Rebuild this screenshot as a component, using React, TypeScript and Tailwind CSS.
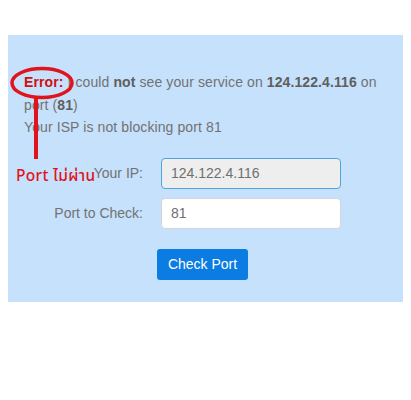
import React from "react";

export default function App() {
  return (
    <div className="w-[411px] h-[400px] bg-white pt-[35px] px-[8px] relative" style={{ fontFamily: "'Liberation Sans', Arial, sans-serif" }}>
      <div className="w-[395px] h-[267px] bg-[#c6e1fb] pt-[36px] pl-[16px] pr-[16px] text-[14px] text-[#727272]">
        <div className="leading-[23px] tracking-[0.1px]">
          <div className="pr-[8px]">
            <span className="text-[#d20f0f] font-bold">Error:</span> I could <b className="text-[#5f5f5f]">not</b> see your service on <b className="text-[#5f5f5f]">124.122.4.116</b> on port (<b className="text-[#5f5f5f]">81</b>)
          </div>
          <div className="leading-[20px]">Your ISP is not blocking port 81</div>
        </div>
        <div className="mt-[21px] flex flex-col gap-[9px]">
          <div className="flex items-center">
            <label className="w-[119px] text-right">Your IP:</label>
            <div className="ml-[18px] w-[180px] h-[31px] rounded-[4px] bg-[#eeeeee] border border-[#4ea6dc] flex items-center px-[9px] text-[#6f6f6f]">124.122.4.116</div>
          </div>
          <div className="flex items-center">
            <label className="w-[119px] text-right">Port to Check:</label>
            <div className="ml-[18px] w-[180px] h-[31px] rounded-[4px] bg-white border border-[#cfd6dd] flex items-center px-[9px] text-[#6f6f6f]">81</div>
          </div>
        </div>
        <div className="mt-[20px] pl-[133px]">
          <button className="w-[91px] h-[31px] rounded-[3px] bg-[#0a7ce2] text-white text-[14px]">Check Port</button>
        </div>
      </div>
      <svg className="absolute left-0 top-0 pointer-events-none" width="411" height="400">
        <ellipse cx="42" cy="83" rx="30" ry="14.5" fill="none" stroke="#e0141c" strokeWidth="3.5" />
        <line x1="36" y1="97" x2="36" y2="159" stroke="#e0141c" strokeWidth="4" />
      </svg>
      <div className="absolute left-[16px] top-[167px] text-[15.5px] text-[#e0141c] font-medium leading-[20px] tracking-[0.3px]" style={{ fontFamily: "'Noto Sans Thai', 'Noto Sans', Tahoma, sans-serif" }}>
        Port ไม่ผ่าน
      </div>
    </div>
  );
}
